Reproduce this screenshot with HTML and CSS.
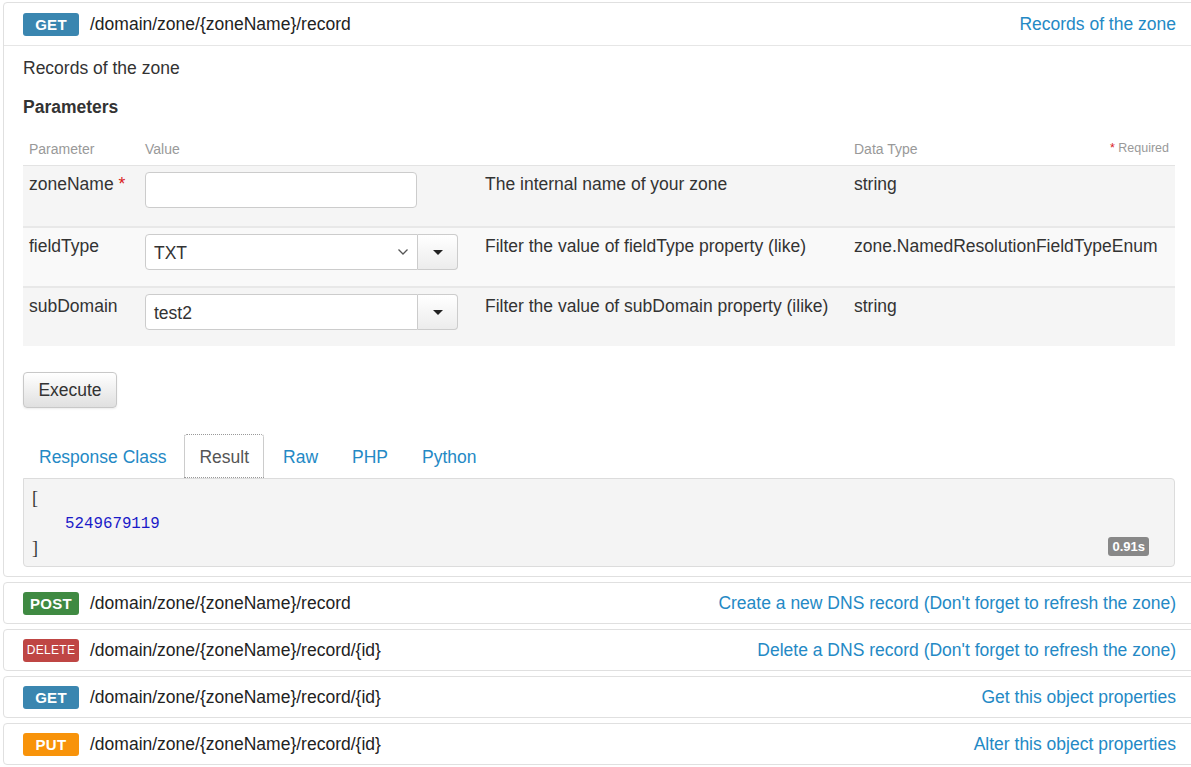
FILE: index.html
```html
<!DOCTYPE html>
<html>
<head>
<meta charset="utf-8">
<link rel="stylesheet" href="styles.css">
</head>
<body>
<div class="page">
  <div class="op op-open">
    <div class="op-head">
      <span class="verb verb-get">GET</span>
      <span class="path">/domain/zone/{zoneName}/record</span>
      <a class="summary">Records of the zone</a>
    </div>
    <div class="op-body">
      <p class="desc">Records of the zone</p>
      <h4 class="params-title">Parameters</h4>
      <table class="params">
        <thead>
          <tr>
            <th class="c-name">Parameter</th>
            <th class="c-value">Value</th>
            <th class="c-desc"></th>
            <th class="c-type">Data Type <span class="req-note"><span class="star">*</span> Required</span></th>
          </tr>
        </thead>
        <tbody>
          <tr class="odd">
            <td>zoneName <span class="star">*</span></td>
            <td><div class="input-wrap"><input class="field" type="text" value=""></div></td>
            <td>The internal name of your zone</td>
            <td>string</td>
          </tr>
          <tr class="even">
            <td>fieldType</td>
            <td>
              <div class="combo">
                <div class="field select">TXT<svg class="chev" width="12" height="8" viewBox="0 0 12 8"><path d="M1.5 1.5 L6 6 L10.5 1.5" fill="none" stroke="#555" stroke-width="1.3"/></svg></div>
                <div class="caret-btn"><span class="caret"></span></div>
              </div>
            </td>
            <td>Filter the value of fieldType property (like)</td>
            <td>zone.NamedResolutionFieldTypeEnum</td>
          </tr>
          <tr class="odd">
            <td>subDomain</td>
            <td>
              <div class="combo">
                <div class="field text">test2</div>
                <div class="caret-btn"><span class="caret"></span></div>
              </div>
            </td>
            <td>Filter the value of subDomain property (ilike)</td>
            <td>string</td>
          </tr>
        </tbody>
      </table>
      <button class="btn-exec">Execute</button>
      <ul class="tabs">
        <li class="tab"><a>Response Class</a></li>
        <li class="tab active"><a>Result</a></li>
        <li class="tab"><a>Raw</a></li>
        <li class="tab"><a>PHP</a></li>
        <li class="tab"><a>Python</a></li>
      </ul>
      <div class="result">
        <div class="code"><span class="br">[</span>
<span class="num">5249679119</span>
<span class="br">]</span></div>
        <span class="time">0.91s</span>
      </div>
    </div>
  </div>

  <div class="op">
    <div class="op-head">
      <span class="verb verb-post">POST</span>
      <span class="path">/domain/zone/{zoneName}/record</span>
      <a class="summary">Create a new DNS record (Don't forget to refresh the zone)</a>
    </div>
  </div>
  <div class="op">
    <div class="op-head">
      <span class="verb verb-delete">DELETE</span>
      <span class="path">/domain/zone/{zoneName}/record/{id}</span>
      <a class="summary">Delete a DNS record (Don't forget to refresh the zone)</a>
    </div>
  </div>
  <div class="op">
    <div class="op-head">
      <span class="verb verb-get">GET</span>
      <span class="path">/domain/zone/{zoneName}/record/{id}</span>
      <a class="summary">Get this object properties</a>
    </div>
  </div>
  <div class="op">
    <div class="op-head">
      <span class="verb verb-put">PUT</span>
      <span class="path">/domain/zone/{zoneName}/record/{id}</span>
      <a class="summary">Alter this object properties</a>
    </div>
  </div>
</div>
</body>
</html>
```

FILE: styles.css
```css
html, body {
  margin: 0;
  padding: 0;
  background: #fff;
  overflow: hidden;
}
body {
  font-family: "Liberation Sans", Arial, sans-serif;
  font-size: 17.5px;
  line-height: 25px;
  color: #333;
}
.page {
  padding: 2px 0 0 3px;
  margin-right: -6px;
}
.op {
  border: 1px solid #e0e0e0;
  border-radius: 4px;
  margin-bottom: 5px;
  background: #fff;
}
.op-head {
  display: flex;
  align-items: center;
  height: 40px;
  padding: 0 20px 0 19px;
}
.op-open .op-head {
  height: 42px;
  border-bottom: 1px solid #e6e6e6;
}
.verb {
  display: inline-block;
  width: 56px;
  height: 23px;
  line-height: 23px;
  border-radius: 3px;
  color: #fff;
  font-weight: bold;
  font-size: 15px;
  text-align: center;
  letter-spacing: 0.3px;
}
.verb-get { background: #3a86b0; }
.verb-post { background: #3f8a42; }
.verb-delete { background: #bf4644; font-size: 12px; font-weight: normal; }
.verb-put { background: #f8930a; }
.path {
  margin-left: 11px;
  color: #222;
}
.summary {
  margin-left: auto;
  color: #2489c5;
  cursor: pointer;
}
.op-body {
  padding: 10px 21px 9px 19px;
}
.desc {
  margin: 0;
}
.params-title {
  margin: 14px 0 14px;
  font-size: 17.5px;
  font-weight: bold;
  line-height: 25px;
}
.params {
  width: 100%;
  border-collapse: collapse;
}
.params th {
  font-size: 14px;
  font-weight: normal;
  color: #999;
  text-align: left;
  padding: 5px 6px 6px;
  line-height: 20px;
  border-bottom: 1px solid #e3e3e3;
}
.params .c-name { width: 104px; }
.params .c-value { width: 328px; }
.params .c-desc { width: 357px; }
.c-type { position: relative; }
.req-note {
  position: absolute;
  right: 6px;
  top: 4px;
  font-size: 12.5px;
  color: #999;
}
.star { color: #d9211c; }
.params td {
  vertical-align: top;
  padding: 6px 6px 16px;
  border-top: 2px solid #e8e8e8;
  white-space: nowrap;
}
.params tbody tr:first-child td { border-top: 0; padding-bottom: 18px; }
.params tr.odd td { background: #f5f5f5; }
.params tr.even td { background: #f9f9f9; }
.input-wrap { width: 272px; }
.field {
  box-sizing: border-box;
  height: 36px;
  width: 272px;
  border: 1px solid #ccc;
  border-radius: 4px;
  background: #fff;
  font: inherit;
  color: #333;
  padding: 0 8px;
  display: block;
}
.combo {
  display: flex;
  width: 313px;
}
.combo .field {
  width: 273px;
  border-radius: 4px 0 0 4px;
  display: flex;
  align-items: center;
  line-height: 36px;
  padding-top: 2px;
}
.combo .select { justify-content: space-between; padding-right: 8px; }
.chev { margin-top: -2px; }
.caret-btn {
  box-sizing: border-box;
  width: 40px;
  height: 36px;
  border: 1px solid #ccc;
  border-left: 0;
  border-radius: 0 4px 4px 0;
  background: linear-gradient(#fff, #ececec);
  display: flex;
  align-items: center;
  justify-content: center;
}
.caret {
  width: 0;
  height: 0;
  border-left: 5px solid transparent;
  border-right: 5px solid transparent;
  border-top: 5px solid #222;
}
.btn-exec {
  display: block;
  margin-top: 26px;
  width: 94px;
  height: 36px;
  border: 1px solid #c8c8c8;
  border-radius: 4px;
  background: linear-gradient(#fff, #e0e0e0);
  box-shadow: 0 1px 2px rgba(0,0,0,0.08);
  font: inherit;
  color: #333;
}
.tabs {
  display: flex;
  list-style: none;
  margin: 26px 0 0;
  padding: 0;
  height: 44px;
}
.tab a {
  display: block;
  box-sizing: border-box;
  height: 44px;
  line-height: 44px;
  padding: 0 14px 0 15px;
  margin-right: 3px;
  color: #2489c5;
  border: 1px solid transparent;
  border-bottom: 0;
}
.tab.active a {
  color: #555;
  border: 1px dotted #999;
  border-radius: 3px 3px 0 0;
  padding: 0 14px;
  background: #fff;
}
.result {
  position: relative;
  box-sizing: border-box;
  height: 89px;
  background: #f4f4f4;
  border: 1px solid #dcdcdc;
  border-radius: 0 4px 4px 4px;
  padding: 7px 8px;
}
.code {
  white-space: pre;
  font-family: "DejaVu Sans Mono", "Liberation Mono", monospace;
  font-size: 15.5px;
  line-height: 24px;
  color: #333;
}
.br { font-family: "Liberation Serif", serif; font-size: 18px; }
.num {
  display: inline-block;
  padding-left: 33px;
  color: #1a1ac8;
  font-family: "Liberation Mono", monospace;
  font-size: 15.8px;
}
.time {
  position: absolute;
  right: 25px;
  bottom: 10px;
  background: #888;
  color: #fff;
  font-size: 13px;
  font-weight: bold;
  line-height: 19px;
  padding: 0 4px;
  border-radius: 3px;
}
```
